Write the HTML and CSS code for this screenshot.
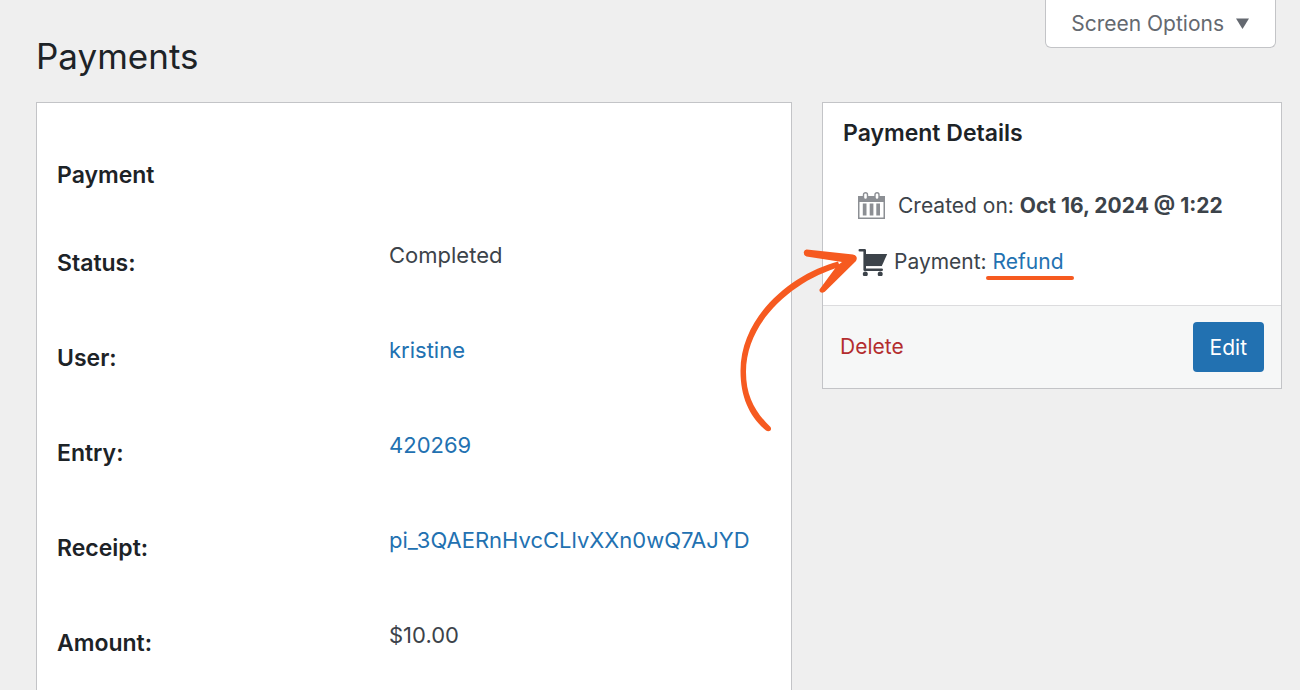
FILE: index.html
```html
<!DOCTYPE html>
<html lang="en">
<head>
  <meta charset="utf-8">
  <title>Payments</title>
  <link rel="stylesheet" href="styles.css">
</head>
<body>
  <header class="header">
    <h1>Payments</h1>
    <button type="button" class="screen-options">Screen Options
      <svg width="14" height="12" viewBox="0 0 14 12" aria-hidden="true"><path d="M0 0.500h13L6.500 11z" fill="#646970"/></svg>
    </button>
  </header>

  <main class="columns">
    <section class="panel payment">
      <h2>Payment</h2>
      <table class="form-table">
        <tr>
          <th scope="row">Status:</th>
          <td>Completed</td>
        </tr>
        <tr>
          <th scope="row">User:</th>
          <td><a href="#">kristine</a></td>
        </tr>
        <tr>
          <th scope="row">Entry:</th>
          <td><a href="#">420269</a></td>
        </tr>
        <tr>
          <th scope="row">Receipt:</th>
          <td><a href="#">pi_3QAERnHvcCLlvXXn0wQ7AJYD</a></td>
        </tr>
        <tr>
          <th scope="row">Amount:</th>
          <td>$10.00</td>
        </tr>
      </table>
    </section>

    <aside class="panel details">
      <h3>Payment Details</h3>
      <div class="misc-row">
        <svg class="icon" width="28" height="28" viewBox="0 0 28 28" aria-hidden="true">
          <path d="M0 4h27v23H0z" fill="#8c8f94"/>
          <path d="M1.500 10h24v15.500h-24z" fill="#fff"/>
          <path d="M4.800 11.500h3.700v12H4.800zM11.700 11.500h3.700v12h-3.700zM18.300 11.500h3.700v12h-3.700z" fill="#8c8f94"/>
          <rect x="5.500" y="0.700" width="4" height="6.800" rx="2" fill="#fff" stroke="#8c8f94" stroke-width="1.400"/>
          <rect x="17" y="0.700" width="4" height="6.800" rx="2" fill="#fff" stroke="#8c8f94" stroke-width="1.400"/>
        </svg>
        <span>Created on: <b>Oct 16, 2024 @ 1:22</b></span>
      </div>
      <div class="misc-row misc-payment">
        <svg class="icon" width="30" height="28" viewBox="0 0 30 28" aria-hidden="true">
          <path d="M1.800 2.300h4.900v19.500h17" fill="none" stroke="#3c434a" stroke-width="2.600" stroke-linecap="round" stroke-linejoin="round"/>
          <path d="M6.700 6h22.500L23.700 18.200H6.700z" fill="#3c434a"/>
          <path d="M8 19h17" stroke="#fff" stroke-width="1.500"/>
          <circle cx="7.300" cy="26" r="2.500" fill="#3c434a"/>
          <circle cx="22.200" cy="26" r="2.500" fill="#3c434a"/>
        </svg>
        <span>Payment: <a href="#" class="refund">Refund</a></span>
        <svg class="arrow" width="130" height="195" viewBox="735 240 130 195" aria-hidden="true">
          <path d="M766 430.500C750 417 740.500 398 740.500 371C740.500 315 793 273.500 838 261.500L840 267C797 279 746 319 746 372C746 397 756 413 770.500 427Q772 430 769.500 431Q767.500 431.500 766 430.500z" fill="#f65a20"/>
          <path d="M806.800 249.500L853 254.500Q858.500 256 856 261L824.800 291.800Q821 294 819.500 291V289.500L837 265.800L842 262L806.500 256.500Q803.500 255.500 803.800 252Q804.500 249.300 806.800 249.500z" fill="#f65a20"/>
        </svg>
      </div>
      <div class="actions">
        <a href="#" class="delete">Delete</a>
        <button type="button" class="edit">Edit</button>
      </div>
    </aside>
  </main>
</body>
</html>
```

FILE: styles.css
```css
* {
  box-sizing: border-box;
}

body {
  margin: 0;
  background-color: #efefef;
  color: #3c434a;
  font-family: Inter, "Liberation Sans", sans-serif;
  font-size: 22px;
  line-height: 28px;
}

a {
  color: #2271b1;
  text-decoration: none;
}

button {
  font-family: inherit;
  cursor: pointer;
}

.header {
  display: flex;
  justify-content: space-between;
  align-items: flex-start;
  padding: 0 24px 0 36px;
}

h1 {
  margin: 0;
  padding: 32px 0 22px;
  color: #1d2327;
  font-size: 35px;
  font-weight: 400;
  line-height: 48px;
}

.screen-options {
  display: flex;
  align-items: center;
  gap: 12px;
  height: 48px;
  padding: 0 25px;
  background-color: #fff;
  border: 1px solid #c3c4c7;
  border-top: none;
  border-radius: 0 0 6px 6px;
  color: #646970;
  font-size: 21px;
}

.columns {
  display: grid;
  grid-template-columns: 1fr 460px;
  align-items: start;
  gap: 30px;
  padding: 0 18px 0 36px;
}

.panel {
  background-color: #fff;
  border: 1px solid #c3c4c7;
}

.payment {
  padding: 58px 20px 20px;
}

h2,
h3 {
  margin: 0;
  color: #1d2327;
  font-size: 23px;
  font-weight: 600;
  line-height: 28px;
}

.form-table {
  width: 100%;
  margin-top: 20px;
  border-collapse: collapse;
}

.form-table th,
.form-table td {
  height: 95px;
  padding: 32px 0;
  text-align: left;
  vertical-align: top;
}

.form-table th {
  width: 332px;
  padding-top: 40px;
  padding-bottom: 24px;
  color: #1d2327;
  font-size: 23px;
  font-weight: 600;
}

.form-table td {
  white-space: nowrap;
}

.details {
  font-size: 21px;
}

.details h3 {
  padding: 16px 20px 45px;
}

.misc-row {
  display: flex;
  align-items: center;
  gap: 12px;
  padding: 0 20px 28px 35px;
}

.misc-row b {
  font-weight: 700;
}

.misc-payment {
  position: relative;
  gap: 6px;
  padding-bottom: 29px;
}

.icon {
  flex: none;
}

.refund {
  position: relative;
}

.refund::after {
  content: "";
  position: absolute;
  left: -7px;
  right: -11px;
  bottom: -6px;
  height: 4px;
  border-radius: 2px;
  background-color: #f65a20;
}

.arrow {
  position: absolute;
  top: -8px;
  left: -88px;
}

.actions {
  display: flex;
  justify-content: space-between;
  align-items: center;
  padding: 16px 17px;
  background-color: #f6f7f7;
  border-top: 1px solid #dcdcde;
}

.delete {
  color: #b32d2e;
}

.edit {
  height: 50px;
  padding: 0 17px;
  background-color: #2271b1;
  border: none;
  border-radius: 4px;
  color: #fff;
  font-size: 21px;
}
```
